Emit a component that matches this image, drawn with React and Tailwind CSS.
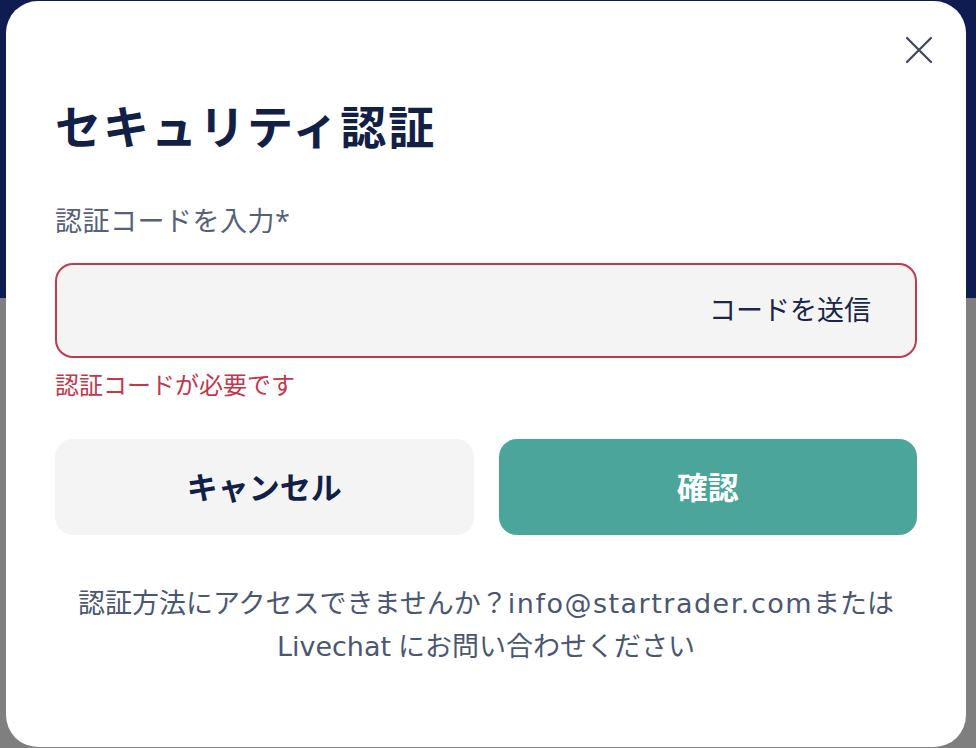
export default function App() {
  const ff = { fontFamily: '"Open Sans", "Noto Sans CJK JP", sans-serif' };
  const lat = "font-['DejaVu_Sans','Noto_Sans_CJK_JP',sans-serif]";
  return (
    <div className="relative w-[976px] h-[748px] overflow-hidden bg-[#7f7f7f]" style={ff}>
      <div className="h-[298px] bg-[#0e1c52]" />
      <div className="absolute left-[6px] top-[1px] w-[960px] h-[746px] bg-white rounded-[32px] px-[49px] pt-[97px] flex flex-col">
        <button className="absolute right-[33px] top-[35px] w-[28px] h-[28px] flex items-center justify-center text-[#3e465a]">
          <svg width="28" height="28" viewBox="0 0 28 28" fill="none" stroke="currentColor" strokeWidth="2.2" strokeLinecap="round">
            <path d="M2 2 L26 26 M26 2 L2 26" />
          </svg>
        </button>
        <h1 className="text-[46px] leading-[56px] font-bold text-[#122046] tracking-[2px]">セキュリティ認証</h1>
        <div className="mt-[51px] text-[27px] leading-[32px] tracking-[0.5px] text-[#55607a]">認証コードを入力*</div>
        <div className="mt-[26px] h-[95px] rounded-[18px] border-2 border-[#c23a4d] bg-[#f4f4f5] flex items-center justify-end pr-[44px]">
          <span className="text-[27px] text-[#1a2648]">コードを送信</span>
        </div>
        <div className="mt-[12px] text-[24px] leading-[30px] text-[#c4364a]">認証コードが必要です</div>
        <div className="mt-[39px] grid grid-cols-2 gap-[25px]">
          <button className="h-[96px] rounded-[18px] bg-[#f4f4f5] text-[31px] font-bold text-[#122046]">キャンセル</button>
          <button className="h-[96px] rounded-[18px] bg-[#4ba59b] text-[31px] font-bold text-white">確認</button>
        </div>
        <p className="mt-[47px] text-center text-[27px] leading-[42px] text-[#4b5671]">
          認証方法にアクセスできませんか？<span className={`${lat} tracking-[1.5px]`}>info@startrader.com</span>または
          <br />
          <span className={lat}>Livechat</span> にお問い合わせください
        </p>
      </div>
    </div>
  );
}
